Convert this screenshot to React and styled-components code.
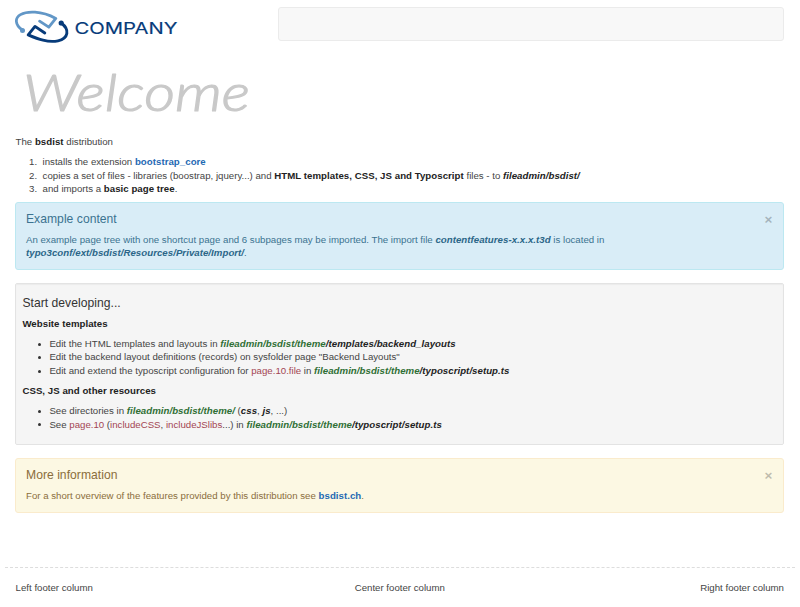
import React from "react";
import styled, { createGlobalStyle } from "styled-components";

const Global = createGlobalStyle`
  * { box-sizing: border-box; }
  body {
    margin: 0;
    background: #fff;
    color: #444;
    font: 9.66px/13.48px "Liberation Sans", Arial, sans-serif;
  }
`;

const Page = styled.div`
  width: 800px;
  height: 607px;
  overflow: hidden;
`;

const Header = styled.header`
  display: flex;
  justify-content: space-between;
  align-items: flex-start;
  height: 60px;
  padding: 7px 16px 0 15px;
`;

const Logo = styled.svg`
  display: block;
  width: 165px;
  height: 40px;
`;

const NavBar = styled.nav`
  width: 506px;
  height: 34px;
  background: #f8f8f8;
  border: 1px solid #ebebeb;
  border-radius: 3px;
`;

const Banner = styled.svg`
  display: block;
  width: 260px;
  height: 66px;
`;

const Content = styled.main`
  height: 507px;
  padding: 0 16px 0 15px;
`;

const Intro = styled.section`
  height: 76px;
  padding: 9px 0 0 0.6px;
`;

const Para = styled.p`
  margin: 0;
`;

const Heading = styled.h4`
  margin: 0 0 6.74px;
  font-size: 12.13px;
  line-height: 13.3px;
  font-weight: 400;
  letter-spacing: 0.03px;
  color: ${(p) => p.$color || "inherit"};
`;

const Steps = styled.ol`
  margin: 6.74px 0;
  padding-left: 27px;
  list-style: none;
  counter-reset: step;

  li::before {
    counter-increment: step;
    content: counter(step) ".";
    display: inline-block;
    width: 13.5px;
    margin-left: -13.5px;
  }
`;

const Bullets = styled.ul`
  margin: 6.74px 0;
  padding-left: 27px;
  list-style: none;

  li::before {
    content: "";
    display: inline-block;
    width: 3px;
    height: 3px;
    margin: 0 8px 0.5px -11px;
    border-radius: 50%;
    background: #333;
    vertical-align: middle;
  }
`;

const Strong = styled.strong`
  color: ${(p) => p.$color || "#222"};
  font-style: ${(p) => (p.$italic ? "italic" : "normal")};
  letter-spacing: 0.04px;
`;

const Code = styled.span`
  color: #a34553;
`;

const Link = styled.a`
  color: #1f69b3;
  font-weight: 700;
  text-decoration: none;
  letter-spacing: 0.04px;
`;

const tones = {
  info: { bg: "#d9edf7", border: "#bce8f1", text: "#3b7390" },
  warning: { bg: "#fcf8e3", border: "#faebcc", text: "#8a6d3b" },
};

const AlertBox = styled.section`
  display: flex;
  justify-content: space-between;
  height: ${(p) => p.$height}px;
  padding: 9.5px 10px 0;
  color: ${(p) => tones[p.$tone].text};
  background: ${(p) => tones[p.$tone].bg};
  border: 1px solid ${(p) => tones[p.$tone].border};
  border-radius: 3px;
`;

const Close = styled.button`
  width: 9px;
  height: 14px;
  padding: 0;
  border: 0;
  background: none;
  color: #000;
  opacity: 0.24;
  font: 700 13.5px/14px "Liberation Sans", Arial, sans-serif;
`;

const Well = styled.section`
  height: 162px;
  margin: 13px 0;
  padding: 12.6px 6.4px;
  background: #f5f5f5;
  border: 1px solid #e3e3e3;
  border-radius: 2px;
  box-shadow: inset 0 1px 1px rgba(0, 0, 0, 0.04);
`;

const Footer = styled.footer`
  display: grid;
  grid-template-columns: 1fr 1fr 1fr;
  height: 40px;
  margin: -66px 5px 0;
  padding: 13px 11px 0 10.6px;
  border-top: 1px dashed #ddd;
`;

const FooterCol = styled.div`
  text-align: ${(p) => p.$align};
`;

const navy = "#073b7a";
const sky = "#6297c7";
const green = "#2f6f34";

function Alert({ tone, height, title, children }) {
  return (
    <AlertBox $tone={tone} $height={height}>
      <div>
        <Heading>{title}</Heading>
        <Para>{children}</Para>
      </div>
      <Close aria-label="Close">×</Close>
    </AlertBox>
  );
}

export default function App() {
  return (
    <Page>
      <Global />
      <Header>
        <Logo viewBox="15 7 165 40" role="img" aria-label="Company">
          <g fill="none" strokeLinejoin="round" strokeLinecap="round">
            <path d="M22.2 30C15 25 14.5 18 20.5 14.6C27 11 41 10.5 55.8 18.4L48.8 27.2L39.6 21.2" stroke={sky} strokeWidth="2.8" />
            <path d="M61.2 23C70 29.5 68.5 38.5 58 40.8C48 43 38 39 28.2 34.8L35 26.4L44.8 33" stroke={navy} strokeWidth="2.9" />
          </g>
          <circle cx="22.5" cy="30.4" r="2.5" fill={sky} />
          <circle cx="61.2" cy="23" r="2.6" fill={navy} />
          <text x="74.5" y="34.2" textLength="103" lengthAdjust="spacingAndGlyphs" fill={navy} stroke={navy} strokeWidth="0.15" fontFamily="Inter, sans-serif" fontSize="16">COMPANY</text>
        </Logo>
        <NavBar />
      </Header>
      <Banner viewBox="0 60 260 66" role="img" aria-label="Welcome">
        <text
          x="23"
          y="110.5"
          textLength="227"
          lengthAdjust="spacingAndGlyphs"
          fill="#c9c9c9"
          stroke="#c9c9c9"
          strokeWidth="1.2"
          strokeLinejoin="round"
          fontFamily="Lato, sans-serif"
          fontStyle="italic"
          fontWeight="300"
          fontSize="51"
        >
          Welcome
        </text>
      </Banner>
      <Content>
        <Intro>
          <Para>The <Strong>bsdist</Strong> distribution</Para>
          <Steps>
            <li>installs the extension <Link>bootstrap_core</Link></li>
            <li>copies a set of files - libraries (boostrap, jquery...) and <Strong>HTML templates, CSS, JS and Typoscript</Strong> files - to <Strong $italic>fileadmin/bsdist/</Strong></li>
            <li>and imports a <Strong>basic page tree</Strong>.</li>
          </Steps>
        </Intro>
        <Alert tone="info" height={68} title="Example content">
          An example page tree with one shortcut page and 6 subpages may be imported. The import file{" "}
          <Strong $italic $color="#2b6688">contentfeatures-x.x.x.t3d</Strong> is located in<br />
          <Strong $italic $color="#2b6688">typo3conf/ext/bsdist/Resources/Private/Import/</Strong>.
        </Alert>
        <Well>
          <Heading $color="#333">Start developing...</Heading>
          <Para><Strong>Website templates</Strong></Para>
          <Bullets>
            <li>Edit the HTML templates and layouts in <Strong $italic $color={green}>fileadmin/bsdist/theme</Strong><Strong $italic>/templates/backend_layouts</Strong></li>
            <li>Edit the backend layout definitions (records) on sysfolder page "Backend Layouts"</li>
            <li>Edit and extend the typoscript configuration for <Code>page.10.file</Code> in <Strong $italic $color={green}>fileadmin/bsdist/theme</Strong><Strong $italic>/typoscript/setup.ts</Strong></li>
          </Bullets>
          <Para><Strong>CSS, JS and other resources</Strong></Para>
          <Bullets>
            <li>See directories in <Strong $italic $color={green}>fileadmin/bsdist/theme/</Strong> (<Strong $italic>css</Strong>, <Strong $italic>js</Strong>, ...)</li>
            <li>See <Code>page.10</Code> (<Code>includeCSS</Code>, <Code>includeJSlibs</Code>...) in <Strong $italic $color={green}>fileadmin/bsdist/theme</Strong><Strong $italic>/typoscript/setup.ts</Strong></li>
          </Bullets>
        </Well>
        <Alert tone="warning" height={55} title="More information">
          For a short overview of the features provided by this distribution see <Link>bsdist.ch</Link>.
        </Alert>
      </Content>
      <Footer>
        <FooterCol $align="left">Left footer column</FooterCol>
        <FooterCol $align="center">Center footer column</FooterCol>
        <FooterCol $align="right">Right footer column</FooterCol>
      </Footer>
    </Page>
  );
}
